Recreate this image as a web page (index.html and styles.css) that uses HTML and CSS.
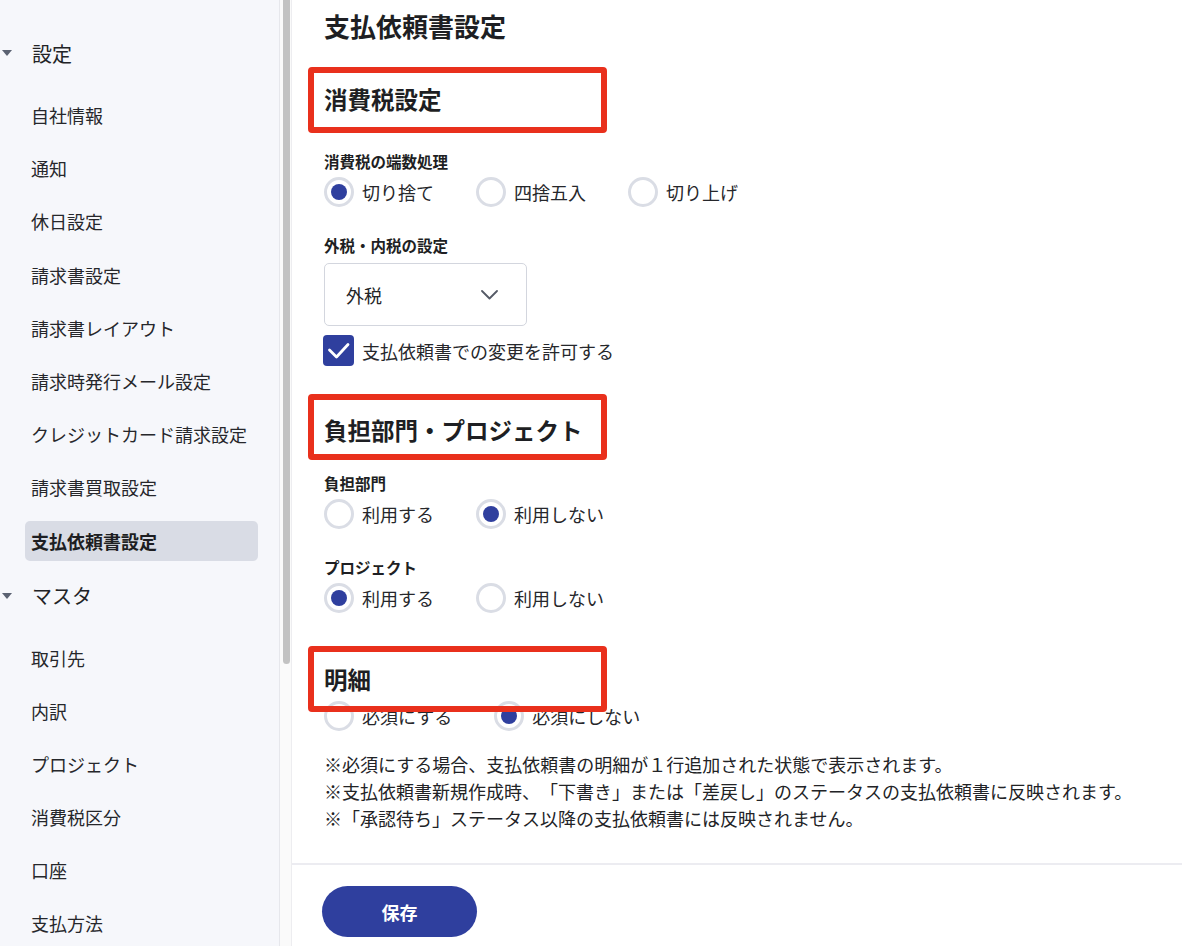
FILE: index.html
```html
<!DOCTYPE html>
<html lang="ja">
<head>
<meta charset="utf-8">
<title>支払依頼書設定</title>
<link rel="stylesheet" href="styles.css">
</head>
<body>
<div class="app">
  <aside class="sidebar">
    <div class="group">
      <div class="group-head"><span class="caret"></span>設定</div>
      <ul class="items">
        <li>自社情報</li>
        <li>通知</li>
        <li>休日設定</li>
        <li>請求書設定</li>
        <li>請求書レイアウト</li>
        <li>請求時発行メール設定</li>
        <li>クレジットカード請求設定</li>
        <li>請求書買取設定</li>
        <li class="active">支払依頼書設定</li>
      </ul>
    </div>
    <div class="group">
      <div class="group-head"><span class="caret"></span>マスタ</div>
      <ul class="items">
        <li>取引先</li>
        <li>内訳</li>
        <li>プロジェクト</li>
        <li>消費税区分</li>
        <li>口座</li>
        <li>支払方法</li>
      </ul>
    </div>
  </aside>
  <div class="scrolltrack"><div class="thumb"></div></div>
  <main class="main">
    <div class="content">
      <h1 class="title">支払依頼書設定</h1>

      <h2 class="sec-head annot annot-1">消費税設定</h2>
      <div class="field-label">消費税の端数処理</div>
      <div class="radios">
        <label class="radio checked"><span class="circle"></span>切り捨て</label>
        <label class="radio"><span class="circle"></span>四捨五入</label>
        <label class="radio"><span class="circle"></span>切り上げ</label>
      </div>
      <div class="field-label gap-l">外税・内税の設定</div>
      <div class="select">
        <span>外税</span>
        <svg class="chev" width="17" height="10" viewBox="0 0 17 10"><path d="M1 1 L8.5 8.5 L16 1" fill="none" stroke="#555a66" stroke-width="1.8" stroke-linecap="round" stroke-linejoin="round"/></svg>
      </div>
      <label class="check-row">
        <span class="checkbox"><svg width="31" height="31" viewBox="0 0 31 31"><path d="M6.5 15 L13.5 22 L25 9.5" fill="none" stroke="#fff" stroke-width="2.8" stroke-linecap="round" stroke-linejoin="round"/></svg></span>
        支払依頼書での変更を許可する
      </label>

      <h2 class="sec-head annot annot-2 mt-2">負担部門・プロジェクト</h2>
      <div class="field-label mt-25">負担部門</div>
      <div class="radios">
        <label class="radio"><span class="circle"></span>利用する</label>
        <label class="radio checked"><span class="circle"></span>利用しない</label>
      </div>
      <div class="field-label gap-l">プロジェクト</div>
      <div class="radios">
        <label class="radio checked"><span class="circle"></span>利用する</label>
        <label class="radio"><span class="circle"></span>利用しない</label>
      </div>

      <h2 class="sec-head annot annot-3 mt-3">明細</h2>
      <div class="radios">
        <label class="radio"><span class="circle"></span>必須にする</label>
        <label class="radio checked"><span class="circle"></span>必須にしない</label>
      </div>
      <div class="notes">
        <p>※必須にする場合、支払依頼書の明細が１行追加された状態で表示されます。</p>
        <p>※支払依頼書新規作成時、「下書き」または「差戻し」のステータスの支払依頼書に反映されます。</p>
        <p>※「承認待ち」ステータス以降の支払依頼書には反映されません。</p>
      </div>
    </div>
    <div class="footer">
      <button class="save">保存</button>
    </div>
  </main>
</div>
</body>
</html>
```

FILE: styles.css
```css
*, *::before, *::after { box-sizing: border-box; }
html, body {
  margin: 0;
  padding: 0;
  background: #ffffff;
}
body {
  font-family: "Noto Sans CJK JP", "Noto Sans", sans-serif;
  color: #222326;
  font-size: 18px;
  width: 1201px;
  height: 946px;
  overflow: hidden;
  text-spacing-trim: space-all;
}
.app {
  display: flex;
  height: 946px;
}

/* Sidebar */
.sidebar {
  width: 280px;
  flex: none;
  background: #f6f7fb;
  border-right: 1px solid #e6e7ec;
  padding-top: 33px;
  display: flex;
  flex-direction: column;
  gap: 15px;
  overflow: hidden;
}
.group-head {
  display: flex;
  align-items: center;
  height: 40px;
  font-size: 20px;
  color: #222326;
}
.caret {
  width: 0;
  height: 0;
  border-left: 5px solid transparent;
  border-right: 5px solid transparent;
  border-top: 6px solid #5b6272;
  margin-left: 2px;
  margin-right: 20px;
}
.items {
  list-style: none;
  margin: 22px 0 0 25px;
  padding: 0;
  display: flex;
  flex-direction: column;
  gap: 13.2px;
}
.items li {
  width: 233px;
  height: 40px;
  line-height: 40px;
  padding-left: 6px;
  border-radius: 5px;
  font-size: 18px;
  color: #26272b;
  white-space: nowrap;
}
.items li.active {
  background: #d9dce5;
  font-weight: 700;
  color: #1d1e22;
}

/* Fake scrollbar */
.scrolltrack {
  width: 12px;
  flex: none;
  background: #fafafa;
  border-right: 1px solid #ededf0;
  padding-left: 3px;
}
.thumb {
  width: 7px;
  height: 664px;
  background: #c2c2c2;
  border-radius: 0 0 4px 4px;
}

/* Main */
.main {
  flex: 1;
  display: flex;
  flex-direction: column;
  min-width: 0;
}
.content {
  padding-left: 32px;
}
.title {
  margin: 9px 0 0;
  font-size: 26px;
  line-height: 34px;
  font-weight: 700;
  color: #1e1f23;
}
.sec-head {
  margin: 39px 0 0;
  font-size: 23.5px;
  line-height: 34px;
  font-weight: 700;
  color: #1e1f23;
}
.sec-head.mt-2 { margin-top: 47px; }
.sec-head.mt-3 { margin-top: 49px; }

/* red annotation boxes drawn over the headings */
.annot { position: relative; }
.annot::after {
  content: "";
  position: absolute;
  left: -16px;
  top: -15px;
  width: 299px;
  height: 66px;
  border: 6px solid #e9301c;
  border-radius: 4px;
  pointer-events: none;
}
.annot-2::after { top: -19px; }
.annot-3::after { top: -16px; }

.field-label {
  margin-top: 34px;
  font-size: 15.5px;
  line-height: 22px;
  font-weight: 700;
  color: #1e1f23;
}
.field-label.gap-l { margin-top: 27px; }
.field-label.mt-25 { margin-top: 25px; }

.radios {
  margin-top: 5px;
  display: flex;
  gap: 42px;
  height: 30px;
  align-items: center;
}
.radio {
  display: flex;
  align-items: center;
  gap: 8px;
  font-size: 18px;
  line-height: 30px;
  color: #26272b;
  white-space: nowrap;
}
.circle {
  width: 30px;
  height: 30px;
  border-radius: 50%;
  border: 3px solid #dadde5;
  background: #fff;
  display: flex;
  align-items: center;
  justify-content: center;
  flex: none;
}
.radio.checked .circle::before {
  content: "";
  width: 16px;
  height: 16px;
  border-radius: 50%;
  background: #2f3f9e;
}

.select {
  margin-top: 7px;
  width: 203px;
  height: 63px;
  border: 1px solid #d3d6de;
  border-radius: 5px;
  display: flex;
  align-items: center;
  justify-content: space-between;
  padding: 0 28px 0 21px;
  font-size: 18px;
  color: #222326;
}
.chev { display: block; margin-top: 1px; }

.check-row {
  margin-top: 9px;
  display: flex;
  align-items: center;
  gap: 8px;
  height: 31px;
  font-size: 18px;
  color: #26272b;
}
.checkbox {
  width: 31px;
  height: 31px;
  border-radius: 4px;
  background: #2f3f9e;
  flex: none;
  margin-left: -1px;
}
.checkbox svg { display: block; }

.notes {
  margin-top: 20px;
}
.notes p {
  margin: 0;
  font-size: 18px;
  line-height: 27px;
  color: #222326;
  white-space: nowrap;
}

.footer {
  margin-top: 31px;
  margin-right: 19px;
  border-top: 2px solid #ececf1;
  padding: 21px 0 0 30px;
}
.save {
  width: 155px;
  height: 51px;
  border: none;
  border-radius: 26px;
  background: #2f3f9e;
  color: #ffffff;
  font-family: "Noto Sans CJK JP", "Noto Sans", sans-serif;
  font-size: 18px;
  font-weight: 700;
  display: block;
  cursor: pointer;
}
```
